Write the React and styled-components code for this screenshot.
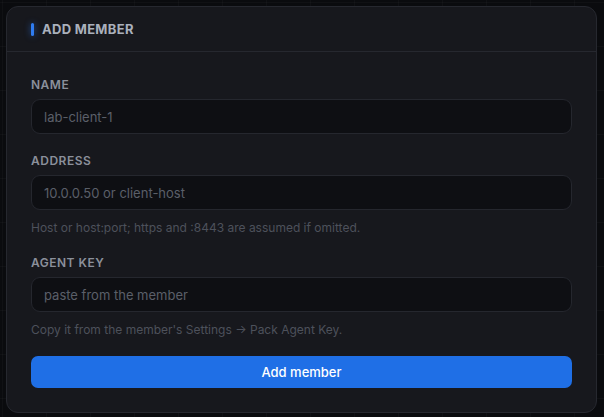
import React from "react";
import styled, { createGlobalStyle } from "styled-components";

const GlobalStyle = createGlobalStyle`
  html, body {
    margin: 0;
    padding: 0;
    height: 100%;
  }
  body {
    background-color: #0a0b0e;
    background-image:
      linear-gradient(rgba(255, 255, 255, 0.025) 1px, transparent 1px),
      linear-gradient(90deg, rgba(255, 255, 255, 0.025) 1px, transparent 1px);
    background-size: 44px 44px;
    background-position: 2px 2px;
    font-family: Inter, "Noto Sans", sans-serif;
    -webkit-font-smoothing: antialiased;
  }
  * {
    box-sizing: border-box;
  }
`;

const Page = styled.div`
  padding: 6px 7px 6px 6px;
`;

const Card = styled.section`
  background: #17181d;
  border: 1px solid #26282f;
  border-radius: 12px;
  overflow: hidden;
`;

const Header = styled.header`
  height: 45px;
  display: flex;
  align-items: center;
  gap: 8px;
  padding: 0 24px;
  border-bottom: 1px solid #26282f;
`;

const Accent = styled.span`
  width: 3px;
  height: 13px;
  border-radius: 2px;
  background: #2f7cf0;
  box-shadow: 0 0 6px rgba(47, 124, 240, 0.6);
`;

const Title = styled.h2`
  margin: 0;
  font-size: 13px;
  font-weight: 700;
  letter-spacing: 0.3px;
  color: #aab0bc;
  line-height: 16px;
`;

const Body = styled.form`
  display: flex;
  flex-direction: column;
  gap: 19px;
  padding: 25px 24px 24px;
`;

const Field = styled.div`
  display: flex;
  flex-direction: column;
`;

const Label = styled.label`
  font-size: 12px;
  font-weight: 600;
  letter-spacing: 0.5px;
  line-height: 16px;
  color: #8b909b;
  margin-bottom: 6px;
`;

const Input = styled.input`
  height: 35px;
  width: 100%;
  padding: 0 12px;
  background: #0e0f13;
  border: 1px solid #25272e;
  border-radius: 9px;
  font-family: inherit;
  font-size: 13px;
  color: #d4d7de;
  outline: none;

  &::placeholder {
    color: #5b5f69;
  }
`;

const Hint = styled.p`
  margin: 10px 0 0;
  font-size: 12px;
  line-height: 16px;
  color: #4d515b;
`;

const Button = styled.button`
  height: 32px;
  margin-top: -1px;
  border: none;
  border-radius: 7px;
  background: #1f6fe6;
  color: #ffffff;
  font-family: inherit;
  font-size: 13px;
  font-weight: 500;
  cursor: pointer;
`;

const fields = [
  { id: "name", label: "NAME", placeholder: "lab-client-1" },
  {
    id: "address",
    label: "ADDRESS",
    placeholder: "10.0.0.50 or client-host",
    hint: "Host or host:port; https and :8443 are assumed if omitted.",
  },
  {
    id: "key",
    label: "AGENT KEY",
    placeholder: "paste from the member",
    hint: "Copy it from the member's Settings \u2192 Pack Agent Key.",
  },
];

const App = () => {
  return (
    <>
      <GlobalStyle />
      <Page>
        <Card>
          <Header>
            <Accent />
            <Title>ADD MEMBER</Title>
          </Header>
          <Body onSubmit={(e) => e.preventDefault()}>
            {fields.map((f) => (
              <Field key={f.id}>
                <Label htmlFor={f.id}>{f.label}</Label>
                <Input id={f.id} placeholder={f.placeholder} />
                {f.hint && <Hint>{f.hint}</Hint>}
              </Field>
            ))}
            <Button type="submit">Add member</Button>
          </Body>
        </Card>
      </Page>
    </>
  );
};

export default App;
